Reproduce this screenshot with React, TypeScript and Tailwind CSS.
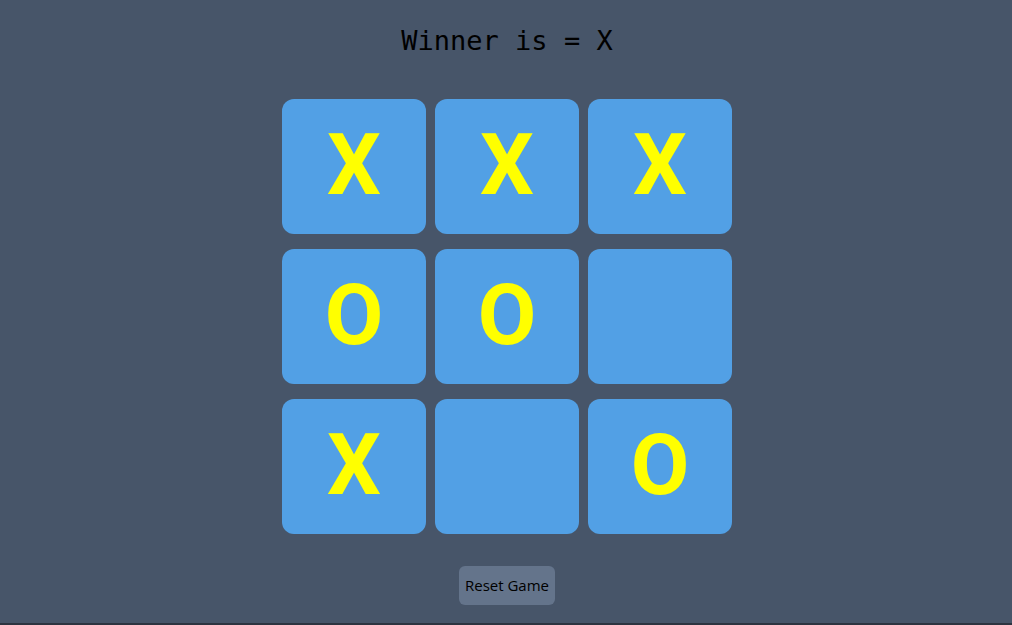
import React, { useState } from "react";

const lines = [
  [0, 1, 2], [3, 4, 5], [6, 7, 8],
  [0, 3, 6], [1, 4, 7], [2, 5, 8],
  [0, 4, 8], [2, 4, 6],
];

const initial = ["X", "X", "X", "O", "O", "", "X", "", "O"];

const App: React.FC = () => {
  const [board, setBoard] = useState<string[]>(initial);

  const winner = lines
    .map(([a, b, c]) => (board[a] && board[a] === board[b] && board[a] === board[c] ? board[a] : ""))
    .find((w) => w);

  const play = (i: number) => {
    if (board[i] || winner) return;
    const xs = board.filter((v) => v === "X").length;
    const os = board.filter((v) => v === "O").length;
    const next = [...board];
    next[i] = xs > os ? "O" : "X";
    setBoard(next);
  };

  return (
    <div className="min-h-screen h-[625px] bg-[#475569] border-b-2 border-[#2d3440] pl-[2px] flex flex-col items-center">
      <h1 className="mt-[24px] text-[27px] leading-[34px] text-black font-['DejaVu_Sans_Mono',monospace]">
        Winner is = {winner ?? "-"}
      </h1>

      {/* Board */}
      <div className="mt-[41px] grid grid-cols-[144px_144px_144px] gap-x-[9px] gap-y-[15px]">
        {board.map((v, i) => (
          <button
            key={i}
            onClick={() => play(i)}
            className="h-[135px] w-[144px] rounded-[12px] bg-[#52a0e5] flex items-center justify-center pb-[2px] text-[#ffff00] text-[85px] font-bold leading-none font-['Roboto',sans-serif]"
          >
            {v}
          </button>
        ))}
      </div>

      <button
        onClick={() => setBoard(Array(9).fill(""))}
        className="mt-[32px] h-[39px] w-[96px] rounded-md bg-[#64748b] text-[15px] text-black font-['Open_Sans',sans-serif]"
      >
        Reset Game
      </button>
    </div>
  );
};

export default App;
